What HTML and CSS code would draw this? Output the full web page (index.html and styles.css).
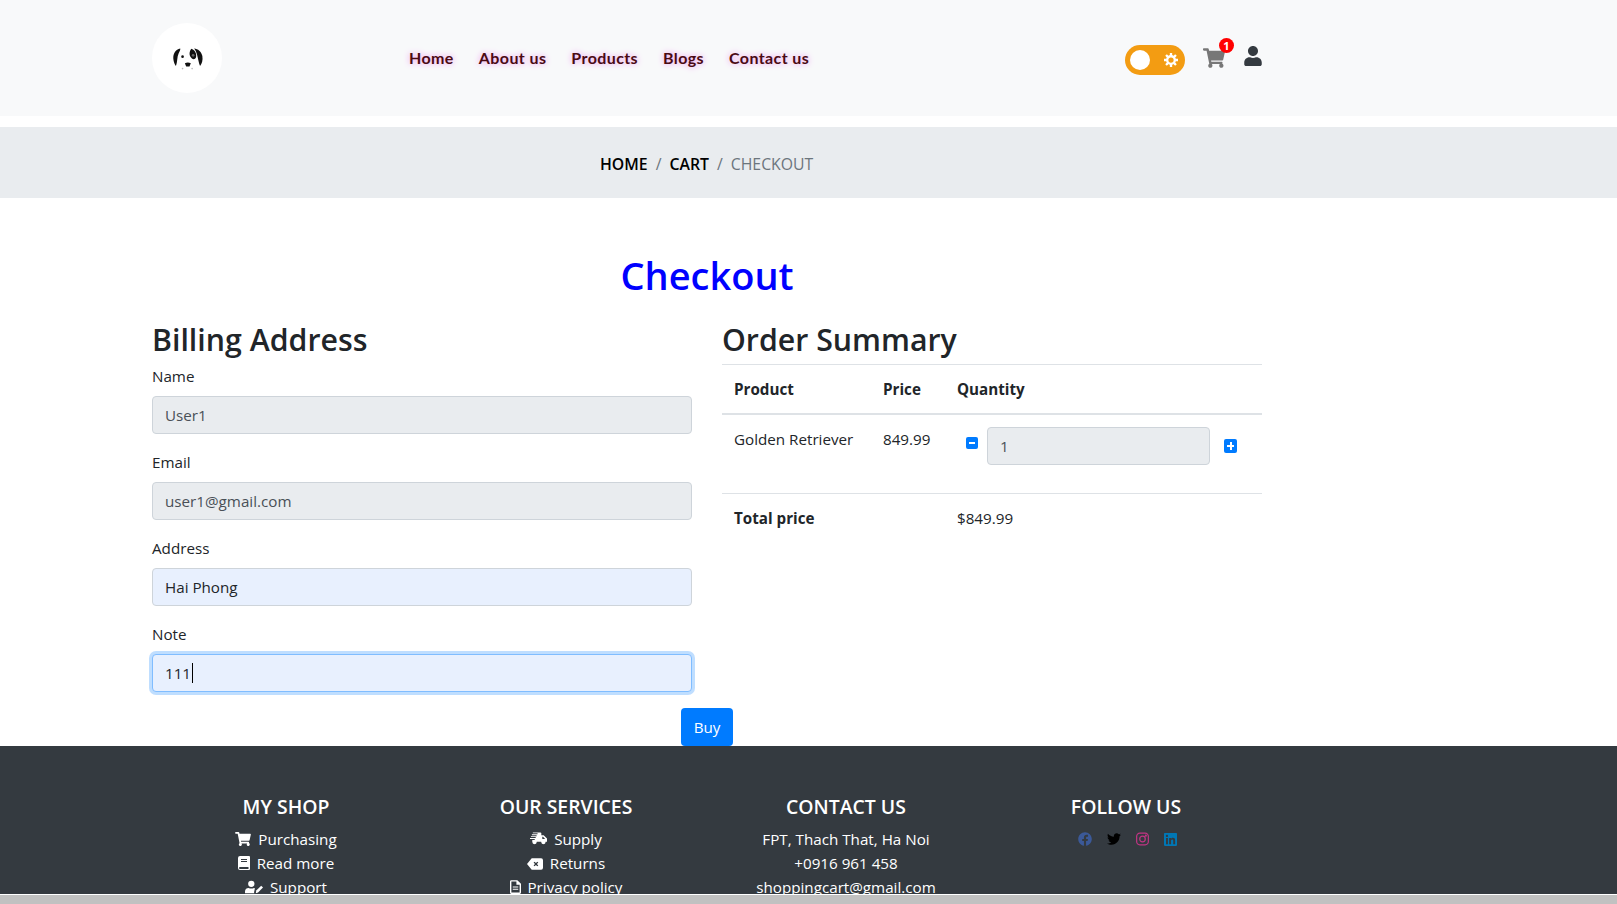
FILE: index.html
```html
<!DOCTYPE html>
<html lang="en">
<head>
  <meta charset="UTF-8" />
  <meta name="viewport" content="width=device-width, initial-scale=1.0"/>
  <title>Checkout</title>
  <link rel="stylesheet" href="styles.css">
</head>
<body>
  <div class="page">
    <div class="scroll-area">
      <header class="navbar">
        <div class="container navbar-inner">
          <a class="logo" href="#">
            <svg viewBox="90 90 100 75" width="33" height="25">
              <path d="M118 97 C104 100 96 112 97 128 C98 138 101 146 105 150 C110 138 108 122 113 112 C116 106 119 101 118 97 Z" fill="#111"/>
              <path d="M152 98 C146 104 144 116 150 124 C155 132 163 132 166 124 C168 114 164 103 152 98 Z" fill="#111"/>
              <path d="M160 97 C172 98 182 106 185 120 C187 132 184 144 178 150 C174 140 172 128 169 116 C167 108 164 102 160 97 Z" fill="#111"/>
              <circle cx="157" cy="118" r="4" fill="#666"/>
              <circle cx="125" cy="122" r="4" fill="#111"/>
              <path d="M132 142 Q141 137 150 142 L146 152 H136 Z" fill="#111"/>
              <circle cx="125" cy="158" r="2.5" fill="#bbb"/>
              <circle cx="154" cy="158" r="2.5" fill="#bbb"/>
            </svg>
          </a>
          <nav class="nav-links">
            <a href="#">Home</a>
            <a href="#">About us</a>
            <a href="#">Products</a>
            <a href="#">Blogs</a>
            <a href="#">Contact us</a>
          </nav>
          <div class="nav-tools">
            <div class="toggle">
              <span class="toggle-knob"></span>
              <svg class="toggle-gear" viewBox="0 0 24 24" width="14" height="14">
                <circle cx="12" cy="12" r="6.5" fill="none" stroke="#fff" stroke-width="4"/>
                <path d="M12 0 V5 M12 19 V24 M0 12 H5 M19 12 H24 M3.5 3.5 L7 7 M17 17 L20.5 20.5 M3.5 20.5 L7 17 M17 7 L20.5 3.5" stroke="#fff" stroke-width="4"/>
              </svg>
            </div>
            <a class="cart" href="#">
              <svg viewBox="0 0 576 512" width="22" height="20" fill="#777">
                <path d="M528.12 301.319l47.273-208C578.806 78.301 567.391 64 551.99 64H159.208l-9.166-44.81C147.758 8.021 137.93 0 126.529 0H24C10.745 0 0 10.745 0 24v16c0 13.255 10.745 24 24 24h69.883l70.248 343.435C147.325 417.1 136 435.222 136 456c0 30.928 25.072 56 56 56s56-25.072 56-56c0-15.674-6.447-29.835-16.824-40h209.647C430.447 426.165 424 440.326 424 456c0 30.928 25.072 56 56 56s56-25.072 56-56c0-22.172-12.888-41.332-31.579-50.405l5.517-24.276c3.413-15.018-8.002-29.319-23.403-29.319H218.117l-6.545-32h293.145c11.206 0 20.92-7.754 23.403-18.681z"/>
              </svg>
              <span class="cart-badge">1</span>
            </a>
            <a class="user" href="#">
              <svg viewBox="0 0 448 512" width="18" height="20" fill="#343a40">
                <path d="M224 256c70.7 0 128-57.3 128-128S294.7 0 224 0 96 57.3 96 128s57.3 128 128 128zm89.6 32h-16.7c-22.2 10.2-46.9 16-72.9 16s-50.6-5.8-72.9-16h-16.7C60.2 288 0 348.2 0 422.4V464c0 26.5 21.5 48 48 48h352c26.5 0 48-21.5 48-48v-41.6c0-74.2-60.2-134.4-134.4-134.4z"/>
              </svg>
            </a>
          </div>
        </div>
      </header>

      <div class="breadcrumb-bar">
        <div class="container breadcrumb">
          <a href="#">HOME</a><span class="sep">/</span><a href="#">CART</a><span class="sep">/</span><span class="current">CHECKOUT</span>
        </div>
      </div>

      <main class="container checkout">
        <h1 class="checkout-title">Checkout</h1>
        <div class="columns">
          <section>
            <h2>Billing Address</h2>
            <div class="form-group">
              <label>Name</label>
              <input class="form-control readonly" type="text" value="User1" readonly>
            </div>
            <div class="form-group">
              <label>Email</label>
              <input class="form-control readonly" type="text" value="user1@gmail.com" readonly>
            </div>
            <div class="form-group">
              <label>Address</label>
              <input class="form-control filled" type="text" value="Hai Phong">
            </div>
            <div class="form-group">
              <label>Note</label>
              <div class="form-control filled focused">111<span class="caret"></span></div>
            </div>
          </section>
          <section>
            <h2>Order Summary</h2>
            <table class="summary">
              <thead>
                <tr>
                  <th class="col-product">Product</th>
                  <th class="col-price">Price</th>
                  <th>Quantity</th>
                </tr>
              </thead>
              <tbody>
                <tr>
                  <td>Golden Retriever</td>
                  <td>849.99</td>
                  <td>
                    <div class="qty">
                      <button class="qty-btn qty-minus" type="button"><span class="bar"></span></button>
                      <input class="form-control readonly qty-input" type="text" value="1" readonly>
                      <button class="qty-btn qty-plus" type="button"><span class="bar"></span><span class="bar bar-v"></span></button>
                    </div>
                  </td>
                </tr>
                <tr>
                  <th colspan="2">Total price</th>
                  <td>$849.99</td>
                </tr>
              </tbody>
            </table>
          </section>
        </div>
        <div class="buy-row"><button class="btn-buy" type="button">Buy</button></div>
      </main>

      <footer class="footer">
        <div class="footer-grid">
          <div class="footer-col">
            <h5>MY SHOP</h5>
            <p>
              <svg class="fi" viewBox="0 0 576 512" width="16" height="14"><path d="M528.12 301.319l47.273-208C578.806 78.301 567.391 64 551.99 64H159.208l-9.166-44.81C147.758 8.021 137.93 0 126.529 0H24C10.745 0 0 10.745 0 24v16c0 13.255 10.745 24 24 24h69.883l70.248 343.435C147.325 417.1 136 435.222 136 456c0 30.928 25.072 56 56 56s56-25.072 56-56c0-15.674-6.447-29.835-16.824-40h209.647C430.447 426.165 424 440.326 424 456c0 30.928 25.072 56 56 56s56-25.072 56-56c0-22.172-12.888-41.332-31.579-50.405l5.517-24.276c3.413-15.018-8.002-29.319-23.403-29.319H218.117l-6.545-32h293.145c11.206 0 20.92-7.754 23.403-18.681z"/></svg>
              Purchasing
            </p>
            <p>
              <svg class="fi" viewBox="0 0 12 14" width="12" height="14"><path fill-rule="evenodd" d="M2 0 H11 A1 1 0 0 1 12 1 V13 A1 1 0 0 1 11 14 H2 A2 2 0 0 1 0 12 V2 A2 2 0 0 1 2 0 Z M3 3 V4 H9 V3 Z M3 5 V6 H9 V5 Z M2 11 A1 1 0 0 0 2 13 H10.5 V11 Z"/></svg>
              Read more
            </p>
            <p>
              <svg class="fi" viewBox="0 0 20 14" width="18" height="14"><circle cx="7" cy="3.5" r="3.5"/><path d="M0 14 V12 C0 9 2 8 4 8 C6 9 8 9 10 8 L11 8.5 L10 13 L10.5 14 Z"/><path d="M12 14 L12.5 11 L18 5.5 L20 7.5 L14.5 13 Z"/></svg>
              Support
            </p>
          </div>
          <div class="footer-col">
            <h5>OUR SERVICES</h5>
            <p>
              <svg class="fi" viewBox="0 0 18 14" width="17" height="14"><path fill-rule="evenodd" d="M3 0 H11 A1 1 0 0 1 12 1 V3 H14.5 L18 6.5 V10 H16.6 A2.4 2.4 0 0 1 11.8 10 H7.2 A2.4 2.4 0 0 1 2.4 10 V8 H5 V7 H0 V6 H6 V5 H1 V4 H7 V3 H2 V2 H8 V1 H3 Z M13 4.5 V7 H16 L13.8 4.5 Z"/><circle cx="4.8" cy="11" r="1.5"/><circle cx="14.2" cy="11" r="1.5"/></svg>
              Supply
            </p>
            <p>
              <svg class="fi" viewBox="0 0 17 12" width="16" height="12"><path fill-rule="evenodd" d="M5 0 H15 A2 2 0 0 1 17 2 V10 A2 2 0 0 1 15 12 H5 L0 6 Z M8 3.5 L7 4.5 L8.5 6 L7 7.5 L8 8.5 L9.5 7 L11 8.5 L12 7.5 L10.5 6 L12 4.5 L11 3.5 L9.5 5 Z"/></svg>
              Returns
            </p>
            <p>
              <svg class="fi" viewBox="0 0 12 15" width="11" height="14"><path fill-rule="evenodd" d="M1.5 0 H8 L12 4 V13.5 A1.5 1.5 0 0 1 10.5 15 H1.5 A1.5 1.5 0 0 1 0 13.5 V1.5 A1.5 1.5 0 0 1 1.5 0 Z M1.5 1.5 V13.5 H10.5 V5 H7 V1.5 Z M3 7 H9 V8 H3 Z M3 9.5 H9 V10.5 H3 Z"/></svg>
              Privacy policy
            </p>
          </div>
          <div class="footer-col">
            <h5>CONTACT US</h5>
            <p>FPT, Thach That, Ha Noi</p>
            <p>+0916 961 458</p>
            <p>shoppingcart@gmail.com</p>
          </div>
          <div class="footer-col">
            <h5>FOLLOW US</h5>
            <div class="socials">
              <svg viewBox="0 0 512 512" width="14" height="14" fill="#3b5998"><path d="M504 256C504 119 393 8 256 8S8 119 8 256c0 123.78 90.69 226.38 209.25 245V327.69h-63V256h63v-54.64c0-62.15 37-96.48 93.67-96.48 27.14 0 55.52 4.84 55.52 4.84v61h-31.28c-30.8 0-40.41 19.12-40.41 38.73V256h68.78l-11 71.69h-57.78V501C413.31 482.38 504 379.78 504 256z"/></svg>
              <svg viewBox="0 0 512 512" width="14" height="14" fill="#000"><path d="M459.37 151.716c.325 4.548.325 9.097.325 13.645 0 138.72-105.583 298.558-298.558 298.558-59.452 0-114.68-17.219-161.137-47.106 8.447.974 16.568 1.299 25.34 1.299 49.055 0 94.213-16.568 130.274-44.832-46.132-.975-84.792-31.188-98.112-72.772 6.498.974 12.995 1.624 19.818 1.624 9.421 0 18.843-1.3 27.614-3.573-48.081-9.747-84.143-51.98-84.143-102.985v-1.299c13.969 7.797 30.214 12.67 47.431 13.319-28.264-18.843-46.781-51.005-46.781-87.391 0-19.492 5.197-37.36 14.294-52.954 51.655 63.675 129.3 105.258 216.365 109.807-1.624-7.797-2.599-15.918-2.599-24.04 0-57.828 46.782-104.934 104.934-104.934 30.213 0 57.502 12.67 76.67 33.137 23.715-4.548 46.456-13.32 66.599-25.34-7.798 24.366-24.366 44.833-46.132 57.827 21.117-2.273 41.584-8.122 60.426-16.243-14.292 20.791-32.161 39.308-52.628 54.253z"/></svg>
              <svg viewBox="0 0 14 14" width="13" height="14" fill="none" stroke="#c13584" stroke-width="1.3"><rect x="0.7" y="0.7" width="12.6" height="12.6" rx="3.5"/><circle cx="7" cy="7" r="3"/><circle cx="10.6" cy="3.4" r="0.5" fill="#c13584"/></svg>
              <svg viewBox="0 32 448 448" width="13" height="13" fill="#0077b5"><path d="M416 32H31.9C14.3 32 0 46.5 0 64.3v383.4C0 465.5 14.3 480 31.9 480H416c17.6 0 32-14.5 32-32.3V64.3c0-17.8-14.4-32.3-32-32.3zM135.4 416H69V202.2h66.5V416zm-33.2-243c-21.3 0-38.5-17.3-38.5-38.5S80.9 96 102.2 96c21.2 0 38.5 17.3 38.5 38.5 0 21.3-17.2 38.5-38.5 38.5zm282.1 243h-66.4V312c0-24.8-.5-56.7-34.5-56.7-34.6 0-39.9 27-39.9 54.9V416h-66.4V202.2h63.7v29.2h.9c8.9-16.8 30.6-34.5 62.9-34.5 67.2 0 79.7 44.3 79.7 101.9V416z"/></svg>
            </div>
          </div>
        </div>
      </footer>
    </div>
    <div class="scrollbar"></div>
  </div>
</body>
</html>
```

FILE: styles.css
```css
* {
  box-sizing: border-box;
}

body {
  margin: 0;
  font-family: "Open Sans", "Noto Sans", sans-serif;
  font-size: 15.2px;
  line-height: 24px;
  color: #212529;
  background-color: #fff;
}

a {
  color: inherit;
  text-decoration: none;
}

.page {
  height: 100vh;
  display: flex;
  flex-direction: column;
  overflow: hidden;
}

.scroll-area {
  flex: 1;
  min-height: 0;
  overflow: hidden;
}

.scrollbar {
  height: 9px;
  margin-top: 1px;
  background-color: #c1c1c1;
}

.container {
  width: 1140px;
  margin-left: 137px;
  padding: 0 15px;
}

/* navbar */
.navbar {
  height: 116px;
  margin-bottom: 11px;
  background-color: #f8f9fa;
}

.navbar-inner {
  height: 100%;
  display: flex;
  align-items: center;
}

.logo {
  width: 70px;
  height: 70px;
  flex: none;
  border-radius: 50%;
  background-color: #fff;
  display: flex;
  align-items: center;
  justify-content: center;
}

.nav-links {
  margin-left: 187px;
  display: flex;
  gap: 25px;
  font-family: "Lato", sans-serif;
  font-weight: 700;
  font-size: 16px;
  letter-spacing: .4px;
  color: #4a0a14;
  text-shadow: 0 0 6px #ec8fec;
}

.nav-tools {
  margin-left: auto;
  display: flex;
  align-items: center;
}

.toggle {
  width: 60px;
  height: 30px;
  margin-top: 4px;
  padding: 0 7px 0 5px;
  border-radius: 15px;
  background-color: #f39c12;
  display: flex;
  align-items: center;
  justify-content: space-between;
}

.toggle-knob {
  width: 20px;
  height: 20px;
  border-radius: 50%;
  background-color: #fff;
}

.cart {
  position: relative;
  margin-left: 18px;
  display: flex;
}

.cart-badge {
  position: absolute;
  top: -10px;
  right: -9px;
  width: 15px;
  height: 15px;
  border-radius: 50%;
  background-color: #f00;
  color: #fff;
  font-size: 11px;
  font-weight: 700;
  line-height: 15px;
  text-align: center;
}

.user {
  margin-left: 19px;
  margin-top: -4px;
  display: flex;
}

/* breadcrumb */
.breadcrumb-bar {
  height: 71px;
  padding-top: 25px;
  background-color: #e9ecef;
}

.breadcrumb {
  padding-left: 463px;
  display: flex;
  font-size: 15.8px;
  font-weight: 600;
  color: #000;
}

.sep {
  margin: 0 8px;
  font-weight: 400;
  color: #6c757d;
}

.current {
  font-weight: 400;
  color: #6c757d;
}

/* checkout */
.checkout {
  padding-top: 53px;
}

.checkout-title {
  margin: 0 0 19px;
  font-size: 38px;
  line-height: 48px;
  font-weight: 600;
  color: #00f;
  text-align: center;
}

.columns {
  display: grid;
  grid-template-columns: 540px 540px;
  gap: 30px;
}

h2 {
  margin: 0 0 8px;
  padding-top: 4px;
  height: 38px;
  font-size: 30.3px;
  line-height: 36px;
  font-weight: 600;
}

.form-group {
  margin-bottom: 16px;
}

label {
  display: block;
  margin-bottom: 8px;
}

.form-control {
  display: block;
  width: 100%;
  height: 38px;
  padding: 6px 12px;
  border: 1px solid #ced4da;
  border-radius: 4px;
  font-family: inherit;
  font-size: 15.2px;
  line-height: 24px;
  color: #495057;
  background-color: #fff;
}

.readonly {
  background-color: #e9ecef;
}

.filled {
  background-color: #e8f0fe;
  color: #212529;
}

.focused {
  border-color: #80bdff;
  box-shadow: 0 0 0 3px rgba(0, 123, 255, .25);
}

.caret {
  display: inline-block;
  width: 1px;
  height: 20px;
  margin-left: 1px;
  vertical-align: -4px;
  background-color: #000;
}

/* table */
.summary {
  width: 100%;
  border-collapse: collapse;
  table-layout: fixed;
}

.summary th,
.summary td {
  padding: 12px;
  border-top: 1px solid #dee2e6;
  text-align: left;
  vertical-align: top;
  font-weight: 400;
}

.summary th {
  font-weight: 700;
}

.summary thead th {
  border-bottom: 2px solid #dee2e6;
}

.col-product {
  width: 149px;
}

.col-price {
  width: 74px;
}

.qty {
  display: flex;
  align-items: flex-start;
  margin-bottom: 16px;
}

.qty-btn {
  position: relative;
  flex: none;
  padding: 0;
  border: none;
  border-radius: 2px;
  background-color: #007bff;
}

.bar {
  position: absolute;
  left: 3px;
  right: 3px;
  top: 50%;
  height: 2px;
  margin-top: -1px;
  background-color: #fff;
}

.bar-v {
  left: 50%;
  right: auto;
  top: 3px;
  width: 2px;
  height: 8px;
  margin: 0 0 0 -1px;
}

.qty-minus {
  width: 12px;
  height: 12px;
  margin: 10px 9px 0;
}

.qty-input {
  width: 223px;
  flex: none;
}

.qty-plus {
  width: 13px;
  height: 14px;
  margin: 12px 0 0 14px;
}

.buy-row {
  display: flex;
  justify-content: center;
}

.btn-buy {
  height: 38px;
  padding: 0 13px;
  border: none;
  border-radius: 4px;
  background-color: #007bff;
  color: #fff;
  font-family: inherit;
  font-size: 15.2px;
}

/* footer */
.footer {
  height: 200px;
  padding-top: 49px;
  background-color: #343a40;
  color: #fff;
}

.footer-grid {
  width: 1120px;
  margin-left: 146px;
  display: grid;
  grid-template-columns: repeat(4, 280px);
  text-align: center;
}

h5 {
  margin: 0 0 8px;
  font-size: 19.4px;
  line-height: 24px;
  font-weight: 600;
}

.footer-col p {
  margin: 0;
}

.fi {
  fill: #fff;
  margin-right: 3px;
  vertical-align: -1px;
}

.socials {
  height: 24px;
  padding-left: 2px;
  display: flex;
  align-items: center;
  justify-content: center;
  gap: 15px;
}
```
